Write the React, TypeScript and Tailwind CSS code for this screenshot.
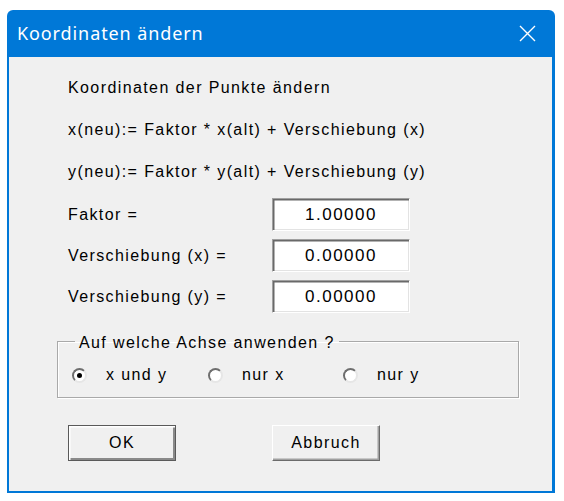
import React from 'react';

// Classic Win32 dialog: "Koordinaten ändern"

const body = "font-['Liberation_Sans',Arial,sans-serif] text-[16px] tracking-[1.4px] text-black";

function NumField({ value }: { value: string }) {
  return (
    <div className="w-[138px] h-[33px] flex items-center justify-center bg-white border-[1.5px] border-t-[#a0a0a0] border-l-[#a0a0a0] border-r-white border-b-white shadow-[inset_1.5px_1.5px_0_#696969,inset_-1px_-1px_0_#e3e3e3]">
      <span className="font-['Liberation_Sans',Arial,sans-serif] text-[17px] tracking-[1.5px] text-black">{value}</span>
    </div>
  );
}

function Radio({ label, checked }: { label: string; checked?: boolean }) {
  return (
    <div className="flex items-center gap-[19px]">
      <div className="w-[15px] h-[15px] rounded-full bg-white border-2 border-t-[#6e6e6e] border-l-[#6e6e6e] border-r-[#e6e6e6] border-b-[#e6e6e6] flex items-center justify-center">
        {checked && <div className="w-[5px] h-[5px] rounded-full bg-black" />}
      </div>
      <span className={body}>{label}</span>
    </div>
  );
}

function Button({ label, isDefault }: { label: string; isDefault?: boolean }) {
  return (
    <div
      className={
        'w-[108px] h-[36px] flex items-center justify-center bg-[#f0f0f0] ' +
        (isDefault
          ? 'border-[1.5px] border-[#5a5a5a] shadow-[inset_1.5px_1.5px_0_#ffffff,inset_-2px_-2px_0_#8a8a8a]'
          : 'border-[1.5px] border-t-white border-l-white border-r-[#6b6b6b] border-b-[#6b6b6b] shadow-[inset_-1.5px_-1.5px_0_#a0a0a0]')
      }
    >
      <span className={body}>{label}</span>
    </div>
  );
}

export default function App() {
  return (
    <div className="w-[564px] h-[501px] bg-white pt-[10px] pl-[7px]">
      <div className="w-[548px] bg-[#0078d7] rounded-t-[6px] pb-[2px]">
        {/* Title bar */}
        <div className="h-[47px] flex items-center justify-between pl-[10px] pr-[19px]">
          <span className="font-['Noto_Sans',sans-serif] text-[18px] tracking-[0.9px] text-white">
            Koordinaten ändern
          </span>
          <svg width="17" height="17" viewBox="0 0 17 17" className="mt-[-1px]">
            <path d="M1 1L16 16M16 1L1 16" stroke="white" strokeWidth="1.4" />
          </svg>
        </div>

        {/* Client area */}
        <div className="ml-[2px] mr-[3px] h-[434px] bg-[#f0f0f0] pt-[21px] pl-[48px]">
          <div className="pl-[11px] flex flex-col gap-[22px]">
            <div className={'h-[20px] flex items-center ' + body}>Koordinaten der Punkte ändern</div>
            <div className={'h-[20px] flex items-center ' + body}>x(neu):= Faktor * x(alt) + Verschiebung (x)</div>
            <div className={'h-[20px] flex items-center ' + body}>y(neu):= Faktor * y(alt) + Verschiebung (y)</div>
          </div>

          <div className="pl-[11px] mt-[16px] flex flex-col gap-[8px]">
            {[
              ['Faktor =', '1.00000'],
              ['Verschiebung (x) =', '0.00000'],
              ['Verschiebung (y) =', '0.00000'],
            ].map(([label, value]) => (
              <div key={label} className="flex items-center">
                <span className={'w-[204px] ' + body}>{label}</span>
                <NumField value={value} />
              </div>
            ))}
          </div>

          <fieldset className="mt-[18px] w-[462px] border border-[#a9a9a9] shadow-[1px_1px_0_#ffffff,inset_1px_1px_0_#ffffff] pb-[12px]">
            <legend className={'ml-[17px] px-[4px] h-[20px] ' + body}>Auf welche Achse anwenden ?</legend>
            <div className="mt-[14px] ml-[14px] h-[20px] flex items-center">
              <div className="w-[136px]"><Radio label="x und y" checked /></div>
              <div className="w-[135px]"><Radio label="nur x" /></div>
              <Radio label="nur y" />
            </div>
          </fieldset>

          <div className="mt-[27px] pl-[11px] flex gap-[96px]">
            <Button label="OK" isDefault />
            <Button label="Abbruch" />
          </div>
        </div>
      </div>
    </div>
  );
}
